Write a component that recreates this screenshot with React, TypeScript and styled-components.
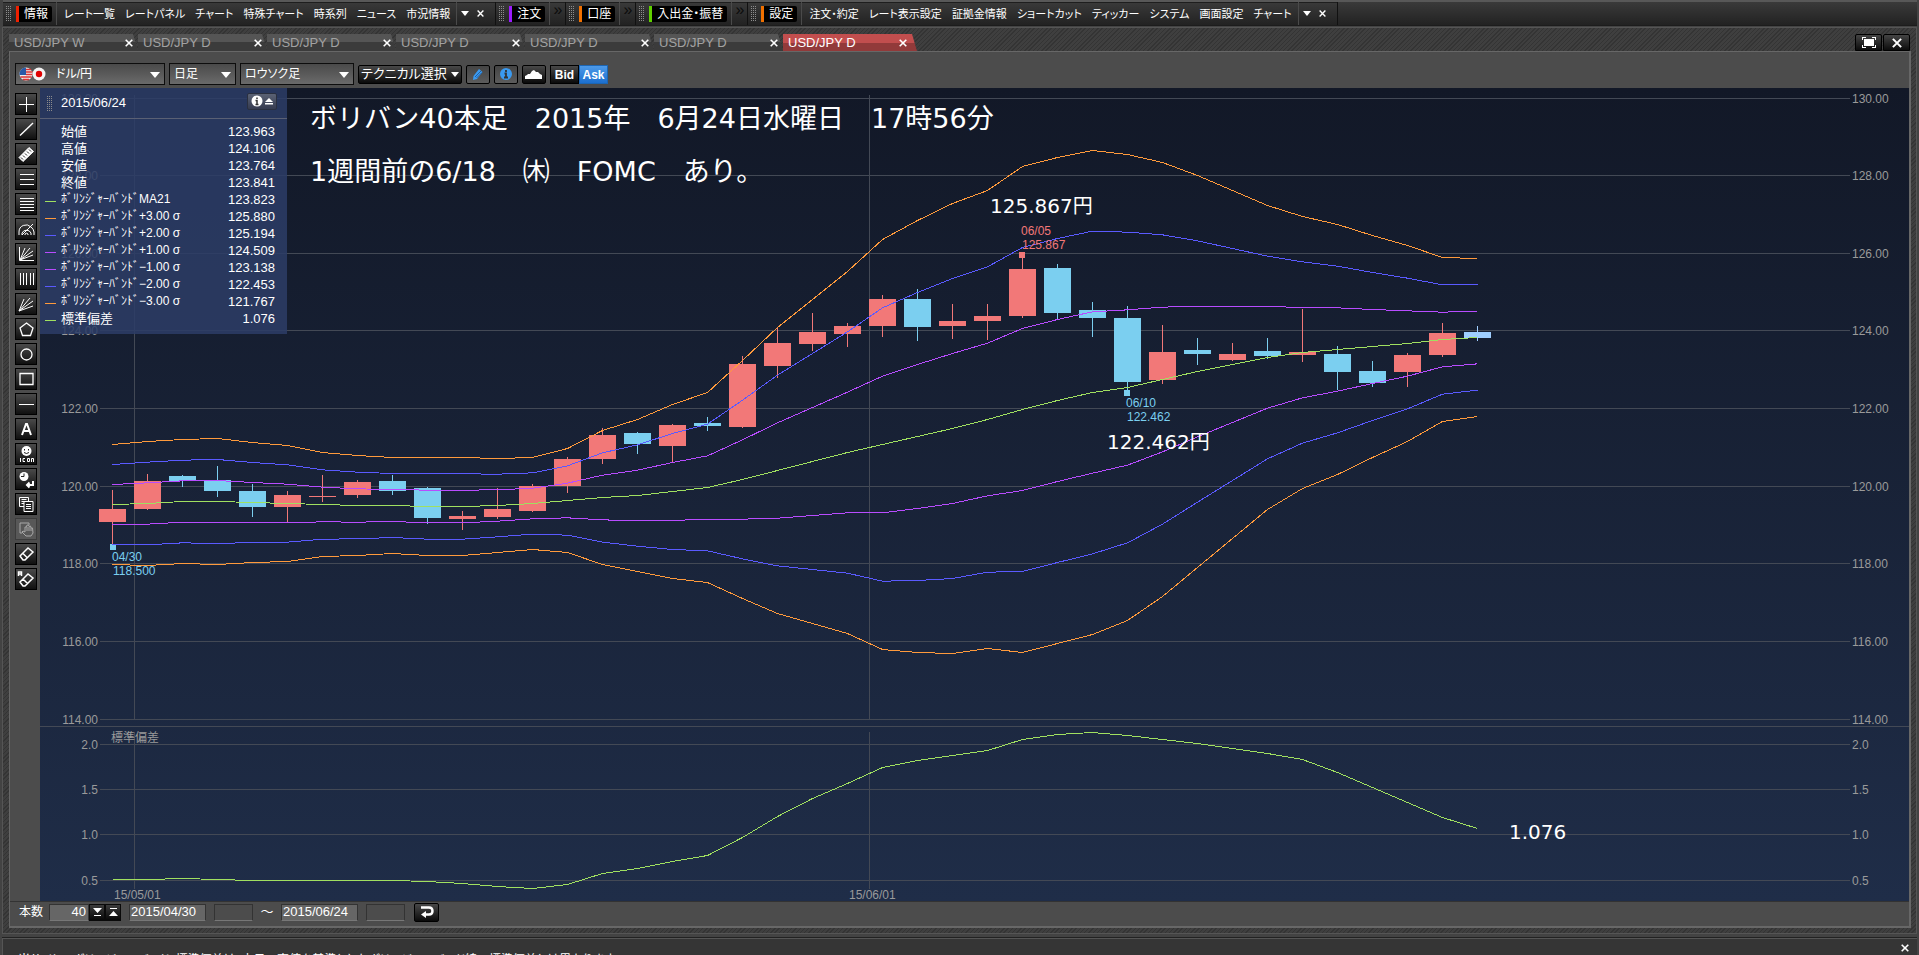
import React from "react";
import styled, { createGlobalStyle } from "styled-components";

const GlobalStyle = createGlobalStyle`
  * { box-sizing: border-box; }
  body { margin: 0; background: #434343; overflow: hidden; }
  button, input, select { font: inherit; color: inherit; margin: 0; }
`;

const uiFont = `"Liberation Sans", "Noto Sans CJK JP", sans-serif`;
const hatch = `repeating-linear-gradient(135deg, #343434 0 1px, #3f3f3f 1px 3px)`;

const Page = styled.div`
  height: 100vh;
  overflow: hidden;
  display: flex;
  flex-direction: column;
  background: #434343;
  color: #fff;
  font-family: ${uiFont};
  font-size: 12px;
  line-height: 16px;
  white-space: nowrap;
`;

/* ---------- top menu ---------- */

const TopBar = styled.header`
  flex: none;
  display: flex;
  height: 26px;
  margin: 0 2px 0 3px;
  border-top: 2px solid #585858;
  border-bottom: 1px solid #1c1c1c;
  background: linear-gradient(#3a3a3a, #222);
  font-feature-settings: "palt";
`;

const MenuGroup = styled.nav`
  display: flex;
  align-items: center;
  border-right: 1px solid #111;
  padding-left: 3px;
  box-shadow: inset 0 1px #1e1e1e;
`;

const Grip = styled.span`
  flex: none;
  width: 5px;
  height: 15px;
  margin-right: 5px;
  background: conic-gradient(transparent 75%, #8c8c8c 0) 0 0 / 2px 2px;
`;

const MenuTitle = styled.button<{ $color: string }>`
  flex: none;
  height: 16px;
  padding: 0 4px 0 5px;
  border: 0;
  border-left: 3px solid ${(p) => p.$color};
  border-radius: 0 2px 2px 0;
  background: #000;
  line-height: 16px;
`;

const MenuItems = styled.div`
  display: flex;
  align-items: center;
  align-self: stretch;
  gap: 10px;
  margin-left: 4px;
  padding: 0 6px 0 7px;
  border-left: 1px solid #4a4a4a;
  border-right: 1px solid #4a4a4a;
  font-size: 11px;
`;

const MenuItem = styled.button`
  padding: 0;
  border: 0;
  background: none;
`;

const MenuTail = styled.div`
  display: flex;
  align-items: center;
  justify-content: space-between;
  width: 38px;
  padding: 0 11px 0 4px;
`;

const BareButton = styled.button`
  display: flex;
  padding: 0;
  border: 0;
  background: none;
`;

const More = styled.button`
  align-self: stretch;
  width: 16px;
  margin-left: 4px;
  padding: 0 0 8px;
  border: 0;
  border-left: 1px solid #4a4a4a;
  background: none;
  color: #0c0c0c;
  font-size: 16px;
  line-height: 12px;
`;

const DownTri = () => (
  <svg width="8" height="5" viewBox="0 0 8 5" fill="#fff"><path d="M0 0h8L4 5z" /></svg>
);
const Cross = ({ size = 7 }: { size?: number }) => (
  <svg width={size} height={size} viewBox="0 0 8 8" stroke="#fff" strokeWidth="1.6" fill="none">
    <path d="M.7.7l6.6 6.6M7.3.7L.7 7.3" />
  </svg>
);

/* ---------- workspace ---------- */

const Workspace = styled.main`
  flex: none;
  margin: 1px 2px 0 2px;
  padding: 6px 5px 5px 6px;
  border: 1px solid #555;
  background: ${hatch};
`;

const TabStrip = styled.div`
  display: flex;
  align-items: flex-end;
  height: 17px;
`;

const Tab = styled.div<{ $active?: boolean }>`
  display: flex;
  align-items: center;
  justify-content: space-between;
  width: ${(p) => (p.$active ? 134 : 129)}px;
  height: 17px;
  padding: 1px ${(p) => (p.$active ? 10 : 5)}px 0 5px;
  clip-path: polygon(0 0, calc(100% - 5px) 0, 100% 100%, 0 100%);
  background: ${(p) =>
    p.$active ? "linear-gradient(#c24e4e 55%, #923a3a 55%)" : "linear-gradient(#555 50%, #3b3b3b 50%)"};
  color: ${(p) => (p.$active ? "#fff" : "#a2a2a2")};
`;

const TabName = styled.button`
  padding: 0;
  border: 0;
  background: none;
  font-size: 13px;
  line-height: 16px;
`;

const WindowButtons = styled.div`
  display: flex;
  gap: 1px;
  margin-left: auto;
  padding-right: 1px;
`;

const WindowButton = styled.button`
  display: flex;
  align-items: center;
  justify-content: center;
  width: 27px;
  height: 17px;
  padding: 0;
  border: 1px solid #000;
  border-radius: 2px 2px 0 0;
  background: linear-gradient(#444, #0c0c0c);
`;

const Panel = styled.section`
  border: 1px solid #676767;
  border-right-width: 2px;
  border-bottom-width: 2px;
  background: #4c4c4c;
`;

const FilterBar = styled.div`
  display: flex;
  align-items: center;
  gap: 4px;
  height: 36px;
  padding: 9px 0 1px 5px;
  font-size: 13px;
  font-feature-settings: "palt";
`;

const SelectBox = styled.label<{ $w: number }>`
  position: relative;
  width: ${(p) => p.$w}px;
  height: 22px;
  border: 1px solid #0d0d0d;
  background: linear-gradient(#4a4a4a, #6a6a6a);
  font-size: 12px;

  svg.arrow { position: absolute; right: 4px; top: 8px; pointer-events: none; }
  svg.flags { position: absolute; left: 3px; top: 3px; pointer-events: none; }
`;

const Select = styled.select<{ $indent?: number }>`
  appearance: none;
  width: 100%;
  height: 20px;
  padding: 0 16px 0 ${(p) => p.$indent ?? 4}px;
  border: 0;
  background: none;
  color: #fff;
  option { color: #000; }
`;

const DarkButton = styled.button<{ $w: number; $lit?: boolean }>`
  display: flex;
  align-items: center;
  justify-content: center;
  gap: 4px;
  width: ${(p) => p.$w}px;
  height: 19px;
  padding: 0;
  border: 1px solid #000;
  border-radius: 2px;
  background: ${(p) => (p.$lit ? "linear-gradient(#444, #5c5c5c)" : "linear-gradient(#484848, #0a0a0a)")};
  line-height: 16px;
`;

const Segmented = styled.div`
  display: flex;
  font-size: 12px;
  font-weight: bold;
`;

const Segment = styled.button<{ $on?: boolean }>`
  width: 29px;
  height: 19px;
  padding: 1px 0 0;
  border: 1px solid ${(p) => (p.$on ? "#1d66b4" : "#000")};
  background: ${(p) => (p.$on ? "linear-gradient(#4d9ae8, #1c6fd0)" : "linear-gradient(#484848, #0a0a0a)")};
  line-height: 16px;
`;

const Body = styled.div`
  display: flex;
  align-items: flex-start;
`;

const Tools = styled.aside`
  flex: none;
  display: flex;
  flex-direction: column;
  gap: 3px;
  width: 30px;
  padding: 5px 0 0 5px;
`;

const ToolButton = styled.button<{ $off?: boolean }>`
  display: flex;
  width: 22px;
  height: 22px;
  padding: 0;
  border: 1px solid ${(p) => (p.$off ? "#3c3c3c" : "#000")};
  background: ${(p) => (p.$off ? "#585858" : "linear-gradient(#4a4a4a, #101010)")};
  color: ${(p) => (p.$off ? "#a8a8a8" : "#fff")};
`;

const ChartArea = styled.div`
  position: relative;
  flex: 1;
  min-width: 0;
  background: linear-gradient(#121827, #1f2d48);

  > svg { display: block; width: 100%; height: auto; }
`;

/* ---------- quote popup ---------- */

const QuoteBox = styled.div`
  position: absolute;
  left: 0;
  top: 0;
  width: 247px;
  height: 246px;
  background: rgba(44, 60, 102, 0.86);
  font-size: 13px;
`;

const QuoteHead = styled.div`
  display: flex;
  align-items: center;
  height: 31px;
  padding: 0 10px 0 7px;
  border-bottom: 1px solid #5a6074;
`;

const QuoteDate = styled.span`
  flex: 1;
  padding-left: 4px;
`;

const InfoButton = styled.button`
  display: flex;
  align-items: center;
  justify-content: center;
  gap: 2px;
  width: 30px;
  height: 17px;
  margin-bottom: 4px;
  padding: 0;
  border: 1px solid #2a3040;
  border-radius: 2px;
  background: linear-gradient(#5b6274, #353b50);
`;

const QuoteTable = styled.table`
  width: 100%;
  margin-top: 4px;
  border-collapse: collapse;

  td, th { height: 17px; padding: 0; font-weight: normal; line-height: 17px; vertical-align: middle; }
  th { text-align: left; }
  td:first-child { width: 21px; padding: 4px 0 0 5px; }
  td:last-child { padding-right: 12px; text-align: right; }
`;

const RowLabel = styled.span<{ $narrow?: boolean }>`
  display: block;
  height: 17px;
  overflow: visible;
  font-size: ${(p) => (p.$narrow ? 12 : 13)}px;
  line-height: 17px;
`;

const Swatch = styled.span<{ $color: string }>`
  display: block;
  width: 11px;
  height: 1px;
  background: ${(p) => p.$color};
`;

/* ---------- footer ---------- */

const Footer = styled.div`
  display: flex;
  align-items: center;
  height: 25px;
  padding: 0 0 4px 9px;
  border-top: 1px solid #333;
  font-size: 13px;
  span.label { font-size: 12px; width: 30px; }
  span.tilde { width: 28px; text-align: center; }
`;

const Field = styled.input<{ $w: number; $blank?: boolean; $right?: boolean }>`
  width: ${(p) => p.$w}px;
  height: 17px;
  padding: 0 2px 1px 1px;
  border: 1px solid #333;
  border-bottom-color: #777;
  background: ${(p) => (p.$blank ? "#4c4c4c" : "#666")};
  text-align: ${(p) => (p.$right ? "right" : "left")};
`;

const Spin = styled.button`
  display: flex;
  align-items: center;
  justify-content: center;
  width: 16px;
  height: 17px;
  padding: 0;
  border: 1px solid #0a0a0a;
  background: linear-gradient(#3c3c3c, #080808);
`;

const Gap = styled.span<{ $w: number }>`
  width: ${(p) => p.$w}px;
`;

const StatusBar = styled.footer`
  flex: none;
  display: flex;
  justify-content: space-between;
  height: 40px;
  margin: 3px 2px 0 2px;
  padding: 14px 8px 0 16px;
  border-top: 1px solid #222;
  box-shadow: inset 1px 1px #555;
  background: #353535;
  font-feature-settings: "palt";
`;

const StatusClose = styled(BareButton)`
  margin-top: -8px;
  height: 8px;
`;

/* ---------- chart data ---------- */

const RED = "#f27878";
const BLUE = "#7bcff0";
const LAST = "#a0cfff";

// body top and bottom, then high and low, in chart units
type Candle = [string, number, number, number, number];
const candles: Candle[] = [
  [RED, 509, 522, 490, 544], [RED, 481, 509, 474, 510], [BLUE, 476, 481, 475, 487], [BLUE, 480, 491, 466, 497],
  [BLUE, 491, 507, 484, 517], [RED, 495, 507, 491, 522], [RED, 496, 497, 475, 502], [RED, 482, 495, 480, 498],
  [BLUE, 481, 491, 475, 495], [BLUE, 488, 518, 487, 524], [RED, 516, 519, 511, 530], [RED, 509, 517, 488, 519],
  [RED, 486, 511, 484, 512], [RED, 459, 486, 457, 493], [RED, 435, 459, 428, 464], [BLUE, 433, 444, 432, 454],
  [RED, 425, 446, 424, 462], [BLUE, 423, 426, 417, 431], [RED, 364, 427, 356, 428], [RED, 343, 366, 327, 378],
  [RED, 332, 344, 313, 351], [RED, 326, 334, 323, 347], [RED, 299, 326, 295, 337], [BLUE, 299, 327, 289, 341],
  [RED, 321, 326, 304, 339], [RED, 316, 321, 304, 340], [RED, 269, 316, 258, 318], [BLUE, 268, 313, 264, 319],
  [BLUE, 310, 318, 302, 337], [BLUE, 318, 382, 306, 390], [RED, 352, 380, 325, 384], [BLUE, 350, 354, 338, 365],
  [RED, 354, 360, 343, 361], [BLUE, 351, 356, 338, 359], [RED, 352, 355, 309, 362], [BLUE, 354, 372, 346, 390],
  [BLUE, 371, 383, 361, 387], [RED, 355, 372, 353, 387], [RED, 333, 355, 323, 357], [LAST, 332, 338, 326, 341],
];

const average = [
  504, 503, 501, 501, 502, 503, 504, 505, 505, 506, 506, 505, 503, 500, 497, 495, 491, 487, 479, 470,
  461, 452, 444, 436, 428, 419, 409, 400, 392, 387, 379, 371, 364, 357, 352, 349, 346, 343, 339, 337,
];
const upper3 = [
  444, 441, 439, 438, 442, 445, 452, 455, 457, 457, 457, 458, 457, 448, 430, 419, 404, 392, 360, 327,
  299, 271, 239, 220, 203, 190, 166, 157, 150, 154, 162, 175, 190, 205, 216, 224, 235, 245, 257, 258,
];
const deviation = [
  879, 879, 878, 879, 880, 880, 880, 880, 880, 881, 883, 886, 888, 884, 873, 868, 861, 855, 837, 816,
  798, 783, 767, 760, 755, 750, 739, 734, 732, 735, 739, 743, 748, 753, 759, 772, 787, 802, 817, 828,
];

const toPoints = (ys: number[]) => ys.map((y, i) => `${112.5 + 35 * i},${y + 0.5}`).join(" ");
const band = (k: number) => average.map((m, i) => m - ((m - upper3[i]) * k) / 3);

const bands: [number, string][] = [
  [3, "#ff9a3c"], [2, "#5a5aff"], [1, "#b84cff"], [-1, "#b84cff"], [-2, "#5a5aff"], [-3, "#ff9a3c"],
];
const GREEN = "#a0e060";

const priceGrid: [string, number][] = [
  ["130.00", 98], ["128.00", 175], ["126.00", 253], ["124.00", 330], ["122.00", 408],
  ["120.00", 486], ["118.00", 563], ["116.00", 641], ["114.00", 719],
];
const devGrid: [string, number][] = [["2.0", 744], ["1.5", 789], ["1.0", 834], ["0.5", 880]];
const months: [string, number][] = [["15/05/01", 134], ["15/06/01", 869]];

const AxisText = styled.text`
  font-family: "Liberation Sans", "Noto Sans CJK JP", sans-serif;
  font-size: 12px;
`;
const NoteText = styled.text<{ $large?: boolean }>`
  font-family: "DejaVu Sans", "Noto Sans CJK JP", sans-serif;
  font-size: ${(p) => (p.$large ? 27 : 20)}px;
  font-weight: 400;
  fill: #fff;
`;

const Chart = () => (
  <svg viewBox="40 88 1869 813" role="img" aria-label="USD/JPY D">
    <g stroke="#434955" shapeRendering="crispEdges">
      {[...priceGrid, ...devGrid].map(([t, y]) => (
        <line key={t} x1="100" x2="1850" y1={y + 0.5} y2={y + 0.5} />
      ))}
      <line x1="40" x2="1909" y1="726.5" y2="726.5" />
      {months.map(([t, x]) => (
        <path key={t} d={`M${x + 0.5} 95V719M${x + 0.5} 732V889`} />
      ))}
    </g>
    <g fill="#9a9a9a">
      {[...priceGrid, ...devGrid].map(([t, y]) => (
        <React.Fragment key={t}>
          <AxisText x="98" y={y + 5} textAnchor="end">{t}</AxisText>
          <AxisText x="1852" y={y + 5}>{t}</AxisText>
        </React.Fragment>
      ))}
      {months.map(([t, x]) => (
        <AxisText key={t} x={x - 20} y="899">{t}</AxisText>
      ))}
      <AxisText x="111" y="742">標準偏差</AxisText>
    </g>
    <g shapeRendering="crispEdges">
      {candles.map(([c, top, bottom, high, low], i) => (
        <g key={i} fill={c}>
          <rect x={112 + 35 * i} y={high} width="1" height={low - high} />
          <rect x={99 + 35 * i} y={top} width="27" height={bottom - top} />
        </g>
      ))}
      <rect x="110" y="544" width="6" height="6" fill={BLUE} />
      <rect x="1019" y="252" width="6" height="6" fill={RED} />
      <rect x="1124" y="390" width="6" height="6" fill={BLUE} />
    </g>
    <g fill="none" shapeRendering="crispEdges">
      {bands.map(([k, c]) => (
        <polyline key={k} points={toPoints(band(k))} stroke={c} />
      ))}
      <polyline points={toPoints(average)} stroke={GREEN} />
      <polyline points={toPoints(deviation)} stroke={GREEN} />
    </g>
    <AxisText x="112" y="561" fill={BLUE}>04/30</AxisText>
    <AxisText x="113" y="575" fill={BLUE}>118.500</AxisText>
    <AxisText x="1021" y="235" fill={RED}>06/05</AxisText>
    <AxisText x="1022" y="249" fill={RED}>125.867</AxisText>
    <AxisText x="1126" y="407" fill={BLUE}>06/10</AxisText>
    <AxisText x="1127" y="421" fill={BLUE}>122.462</AxisText>
    <NoteText $large x="310" y="128">ボリバン40本足　2015年　6月24日水曜日　17時56分</NoteText>
    <NoteText $large x="310" y="181">1週間前の6/18　㈭　FOMC　あり。</NoteText>
    <NoteText x="990" y="213">125.867円</NoteText>
    <NoteText x="1107" y="449">122.462円</NoteText>
    <NoteText x="1509" y="839">1.076</NoteText>
  </svg>
);

/* ---------- drawing tools ---------- */

const sheet = "M3.5 3.5h9v9h-9z M5.5 5.5h5 M5.5 7.5h5 M5.5 9.5h5";
const tools: [string, React.ReactNode][] = [
  ["クロス", <path d="M3 10.5h15M10.5 3v15" shapeRendering="crispEdges" />],
  ["ライン", <path d="M4 16.5L17 4" strokeWidth="1.4" />],
  ["定規", <><path d="M3 13.5L13 3.5l4.500 4L7 17.500z" fill="currentColor" /><path d="M5 13.500l2 2M7 11.500l2 2M9 9.500l2 2M11 7.500l2 2M13 5.500l2 2" stroke="#222" /></>],
  ["三本線", <path d="M4 5.5h14M4 10.5h14M4 15.5h14" shapeRendering="crispEdges" />],
  ["五本線", <path d="M4 4.5h14M4 7.500h14M4 10.5h14M4 13.5h14M4 16.5h14" shapeRendering="crispEdges" />],
  ["アーク", <path d="M3 16v-3a7 7 0 0 1 12-5a7 7 0 0 1 3 5v3M6 16v-2a5 5 0 0 1 9 0v2M9 16v-1a2 2 0 0 1 3 0v1M6 16L17 5" />],
  ["ファン", <path d="M3.500 3v13.500H18M4 16L9 4M4 16L14 4M4 16l13-9M4 16l13-5" />],
  ["縦線", <path d="M4.500 4v12M7.500 4v12M10.500 4v12M14.500 4v12M17.500 4v12" shapeRendering="crispEdges" />],
  ["扇形", <path d="M3 17L8 5M3 17L14 4M3 17l14-10M3 17l14-5" />],
  ["五角形", <path d="M10.500 4L17 9l-2.500 7.500h-8L4 9z" strokeWidth="1.3" />],
  ["円", <circle cx="10.500" cy="10.500" r="5.500" strokeWidth="1.3" />],
  ["四角", <path d="M4 4.500h13v11H4z" strokeWidth="1.3" />],
  ["水平線", <path d="M3 10.500h15" shapeRendering="crispEdges" />],
  ["文字", <path d="M6 16L10 5h1l4 11M7 12h7" strokeWidth="2" />],
  ["アイコン", <><circle cx="10.500" cy="7" r="5" fill="currentColor" stroke="none" /><path d="M8.500 5v1.500M12.500 5v1.500M8 8.500q2.500 2 5 0" stroke="#222" /><path d="M4.500 14v4M9 14.500H7v3h2M11.500 14.500h2v3h-2zM15.500 18v-3.500h2V18" /></>],
  ["時間", <><circle cx="8" cy="7.500" r="4.500" fill="currentColor" stroke="none" /><path d="M8 4.500v3h-3" stroke="#222" /><path d="M17 12v4h-5M13.500 13.500L11 16l2.500 2.500" strokeWidth="2" /></>],
  ["コピー", <><path d={sheet} /><path d="M8 7.500h9v10H8z" fill="#222" /><path d="M10 10.500h5M10 12.500h5M10 14.500h5" /></>],
  ["移動", <path d="M6 14H4V4h9v2M10 17l-4-4 1-1 2 1V8h1.500l.5-2h1.500l.5 1.500L14.500 7l.5 2 1.500 0 .5 5-2 3zM11 8v4M13 8v4M15 9v3" />],
  ["消しゴム", <path d="M4 12L12 4l5 4-8 8H7zM7 9.500l4.500 4.500" strokeWidth="1.500" />],
  ["全消去", <path d="M4 13L12 5l5 4-8 8H7zM7 10l4.500 4.500M2.500 7V3h3v4M2.500 5h3" strokeWidth="1.500" />],
];

/* ---------- texts ---------- */

const infoMenu = ["レート一覧", "レートパネル", "チャート", "特殊チャート", "時系列", "ニュース", "市況情報"];
const settingMenu = ["注文・約定", "レート表示設定", "証拠金情報", "ショートカット", "ティッカー", "システム", "画面設定", "チャート"];
const shortGroups: [string, string][] = [["注文", "#9b1cff"], ["口座", "#f07000"], ["入出金・振替", "#5fd000"]];
const tabs = ["USD/JPY W", "USD/JPY D", "USD/JPY D", "USD/JPY D", "USD/JPY D", "USD/JPY D", "USD/JPY D"];

const bb = "ﾎﾞﾘﾝｼﾞｬｰﾊﾞﾝﾄﾞ";
const quotes: [string, string, string?][] = [
  ["始値", "123.963"], ["高値", "124.106"], ["安値", "123.764"], ["終値", "123.841"],
  [`${bb}MA21`, "123.823", GREEN],
  [`${bb}+3.00 σ`, "125.880", "#ff9a3c"],
  [`${bb}+2.00 σ`, "125.194", "#5a5aff"],
  [`${bb}+1.00 σ`, "124.509", "#b84cff"],
  [`${bb}−1.00 σ`, "123.138", "#b84cff"],
  [`${bb}−2.00 σ`, "122.453", "#5a5aff"],
  [`${bb}−3.00 σ`, "121.767", "#ff9a3c"],
  ["標準偏差", "1.076", GREEN],
];

const FullMenu = ({ title, color, items }: { title: string; color: string; items: string[] }) => (
  <MenuGroup>
    <Grip />
    <MenuTitle $color={color}>{title}</MenuTitle>
    <MenuItems>
      {items.map((t) => <MenuItem key={t}>{t}</MenuItem>)}
    </MenuItems>
    <MenuTail>
      <BareButton aria-label="メニュー"><DownTri /></BareButton>
      <BareButton aria-label="閉じる"><Cross size={7} /></BareButton>
    </MenuTail>
  </MenuGroup>
);

export default function App() {
  return (
    <Page>
      <GlobalStyle />
      <TopBar>
        <FullMenu title="情報" color="#f02000" items={infoMenu} />
        {shortGroups.map(([t, c]) => (
          <MenuGroup key={t}>
            <Grip />
            <MenuTitle $color={c}>{t}</MenuTitle>
            <More aria-label={`${t}を展開`}>»</More>
          </MenuGroup>
        ))}
        <FullMenu title="設定" color="#f07000" items={settingMenu} />
      </TopBar>

      <Workspace>
        <TabStrip>
          {tabs.map((t, i) => (
            <Tab key={i} $active={i === 6}>
              <TabName>{t}</TabName>
              <BareButton aria-label="タブを閉じる"><Cross size={8} /></BareButton>
            </Tab>
          ))}
          <WindowButtons>
            <WindowButton aria-label="最大化">
              <svg width="14" height="11" viewBox="0 0 14 11" fill="none" stroke="#fff" shapeRendering="crispEdges">
                <rect x="2" y="2" width="10" height="7" fill="#fff" stroke="none" />
                <path d="M.5 3V.5H4M10 .5h3.500V3M13.500 8v2.500H10M4 10.500H.5V8" />
              </svg>
            </WindowButton>
            <WindowButton aria-label="閉じる"><Cross size={10} /></WindowButton>
          </WindowButtons>
        </TabStrip>

        <Panel>
          <FilterBar>
            <SelectBox $w={150}>
              <svg className="flags" width="27" height="14" viewBox="0 0 27 14">
                <circle cx="7" cy="7" r="6.500" fill="#eee" />
                <path d="M7 2.500h5M7 5h6.500M7 7.500h6.500M1.500 10h11M4 12.500h6" stroke="#d33" strokeWidth="1.300" />
                <path d="M7 .5A6.500 6.500 0 0 0 .5 8H7z" fill="#2a5aa8" />
                <circle cx="20" cy="7" r="6.500" fill="#f4f4f4" />
                <circle cx="20" cy="7" r="3.200" fill="#e00000" />
              </svg>
              <Select $indent={40} aria-label="通貨ペア"><option>ドル/円</option></Select>
              <svg className="arrow" width="10" height="6" viewBox="0 0 10 6" fill="#fff"><path d="M0 0h10L5 6z" /></svg>
            </SelectBox>
            <SelectBox $w={67}>
              <Select aria-label="足種"><option>日足</option></Select>
              <svg className="arrow" width="10" height="6" viewBox="0 0 10 6" fill="#fff"><path d="M0 0h10L5 6z" /></svg>
            </SelectBox>
            <SelectBox $w={114}>
              <Select aria-label="チャート種類"><option>ロウソク足</option></Select>
              <svg className="arrow" width="10" height="6" viewBox="0 0 10 6" fill="#fff"><path d="M0 0h10L5 6z" /></svg>
            </SelectBox>
            <DarkButton $w={104}>テクニカル選択<DownTri /></DarkButton>
            <DarkButton $w={24} $lit aria-label="描画">
              <svg width="14" height="14" viewBox="0 0 14 14"><path d="M2 13l.5-4L8 2l3.500 3L6 12z" fill="#3a9af0" /><path d="M4 10l6-6M5.500 11L11 5.500" stroke="#1c4f8c" strokeWidth=".8" /></svg>
            </DarkButton>
            <DarkButton $w={24} $lit aria-label="情報">
              <svg width="14" height="14" viewBox="0 0 14 14"><circle cx="7" cy="7" r="6" fill="#3a9af0" /><path d="M7 3v2M5.500 6.500H7V11M5 10.500h4" stroke="#333" strokeWidth="1.800" fill="none" /></svg>
            </DarkButton>
            <DarkButton $w={24} aria-label="チャート表示">
              <svg width="18" height="10" viewBox="0 0 18 10"><path d="M0 10V7l2-1 1-1 2 0 2-3 2-1 2 2 2 0 2 2 2 1v4z" fill="#fff" /></svg>
            </DarkButton>
            <Segmented>
              <Segment>Bid</Segment>
              <Segment $on>Ask</Segment>
            </Segmented>
          </FilterBar>

          <Body>
            <Tools>
              {tools.map(([name, icon], i) => (
                <ToolButton key={name} $off={i === 17} aria-label={name}>
                  <svg width="20" height="20" viewBox="0 0 20 20" fill="none" stroke="currentColor">{icon}</svg>
                </ToolButton>
              ))}
            </Tools>
            <ChartArea>
              <Chart />
              <QuoteBox>
                <QuoteHead>
                  <Grip />
                  <QuoteDate>2015/06/24</QuoteDate>
                  <InfoButton aria-label="情報を閉じる">
                    <svg width="22" height="12" viewBox="0 0 22 12">
                      <circle cx="6" cy="6" r="5.500" fill="#fff" />
                      <path d="M6 2.500v1.500M4.500 5.500H6v4M4.500 9.500h3" stroke="#333" strokeWidth="1.500" fill="none" />
                      <path d="M14 7h8l-4-4zM14 8h8v1.500h-8z" fill="#fff" />
                    </svg>
                  </InfoButton>
                </QuoteHead>
                <QuoteTable>
                  <tbody>
                    {quotes.map(([label, value, color]) => (
                      <tr key={label}>
                        <td>{color && <Swatch $color={color} />}</td>
                        <th scope="row"><RowLabel $narrow={label.startsWith(bb)}>{label}</RowLabel></th>
                        <td>{value}</td>
                      </tr>
                    ))}
                  </tbody>
                </QuoteTable>
              </QuoteBox>
            </ChartArea>
          </Body>

          <Footer>
            <span className="label">本数</span>
            <Field $w={40} $right defaultValue="40" aria-label="本数" />
            <Spin aria-label="減らす"><svg width="9" height="8" viewBox="0 0 9 8" fill="#fff"><path d="M0 0h9L4.500 5zM1 7h7v1H1z" /></svg></Spin>
            <Spin aria-label="増やす"><svg width="9" height="8" viewBox="0 0 9 8" fill="#fff"><path d="M0 8h9L4.500 3zM1 0h7v1H1z" /></svg></Spin>
            <Gap $w={8} />
            <Field $w={77} defaultValue="2015/04/30" aria-label="開始日" />
            <Gap $w={8} />
            <Field $w={39} $blank aria-label="開始時刻" />
            <span className="tilde">～</span>
            <Field $w={77} defaultValue="2015/06/24" aria-label="終了日" />
            <Gap $w={8} />
            <Field $w={39} $blank aria-label="終了時刻" />
            <Gap $w={9} />
            <DarkButton $w={25} aria-label="戻す">
              <svg width="14" height="12" viewBox="0 0 14 12" fill="none" stroke="#fff" strokeWidth="2.400"><path d="M1 1.500h8q3.500 0 3.500 3.500t-3.500 3.500H4" /><path d="M6 5L1 8.500 6 12z" fill="#fff" stroke="none" /></svg>
            </DarkButton>
          </Footer>
        </Panel>
      </Workspace>

      <StatusBar>
        <span>当サイトのボリンジャーバンド・標準偏差は、土日の高値を基準としたボリンジャーバンド線の標準偏差とは異なります。</span>
        <StatusClose aria-label="閉じる"><Cross size={8} /></StatusClose>
      </StatusBar>
    </Page>
  );
}
